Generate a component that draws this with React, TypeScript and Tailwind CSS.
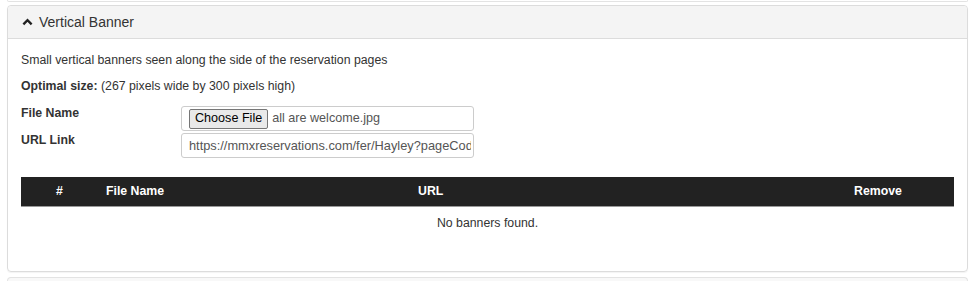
const App = () => {
  return (
    <div className="w-[975px] h-[281px] overflow-hidden bg-white px-[7px] font-['Liberation_Sans',Arial,sans-serif] text-[12.3px] text-[#333]">
      {/* tail of the previous panel */}
      <div className="h-[2px] border border-t-0 border-[#e3e3e3] rounded-b-[4px]" />

      <section className="mt-[3px] border border-[#dcdcdc] rounded-[4px] shadow-[0_1px_1px_rgba(0,0,0,0.05)]">
        <div className="h-[33px] flex items-center gap-[6px] px-[14px] bg-[#f4f4f4] border-b border-[#dcdcdc] rounded-t-[4px] text-[14px] text-[#333]">
          <svg viewBox="0 0 12 8" className="w-[11px] h-[8px]">
            <polyline points="1.5,6.5 6,2 10.5,6.5" fill="none" stroke="#222" strokeWidth="2.6" strokeLinejoin="miter" />
          </svg>
          <span>Vertical Banner</span>
        </div>

        <div className="px-[13px] pt-[12px] pb-[15px]">
          <p className="leading-[18px]">Small vertical banners seen along the side of the reservation pages</p>
          <p className="leading-[18px] mt-[8px]">
            <span className="font-bold">Optimal size:</span> (267 pixels wide by 300 pixels high)
          </p>

          <div className="mt-[9px]">
            <div className="flex h-[27px]">
              <label className="w-[160px] leading-[18px] font-bold">File Name</label>
              <div className="mt-[2px] w-[293px] h-[25px] flex items-center gap-[4px] pl-[7px] border border-[#ccc] rounded-[3px]">
                <span className="h-[20px] px-[5px] flex items-center bg-[#e9e9e9] border border-[#767676] rounded-[2px] text-[12.6px] text-black">Choose File</span>
                <span className="text-[12.6px] text-[#555]">all are welcome.jpg</span>
              </div>
            </div>
            <div className="flex h-[27px]">
              <label className="w-[160px] leading-[18px] font-bold">URL Link</label>
              <div className="mt-[2px] w-[293px] h-[25px] flex items-center pl-[7px] pr-[2px] border border-[#ccc] rounded-[3px] overflow-hidden whitespace-nowrap text-[12.8px] text-[#555]">
                <span className="overflow-hidden">https://mmxreservations.com/fer/Hayley?pageCode</span>
              </div>
            </div>
          </div>

          <div className="mt-[19px]">
            <div className="h-[30px] grid grid-cols-[77px_312px_412px_1fr] items-center bg-[#222] border-b border-[#999] text-white font-bold">
              <div className="text-center">#</div>
              <div className="pl-[8px]">File Name</div>
              <div className="pl-[8px]">URL</div>
              <div className="pl-[32px]">Remove</div>
            </div>
            <div className="h-[32px] flex items-center justify-center">No banners found.</div>
          </div>
          <div className="h-[17px]" />
        </div>
      </section>

      {/* head of the next panel */}
      <div className="mt-[5px] h-[10px] border border-b-0 border-[#e3e3e3] rounded-t-[4px] bg-[#f8f8f8]" />
    </div>
  );
};

export default App;
